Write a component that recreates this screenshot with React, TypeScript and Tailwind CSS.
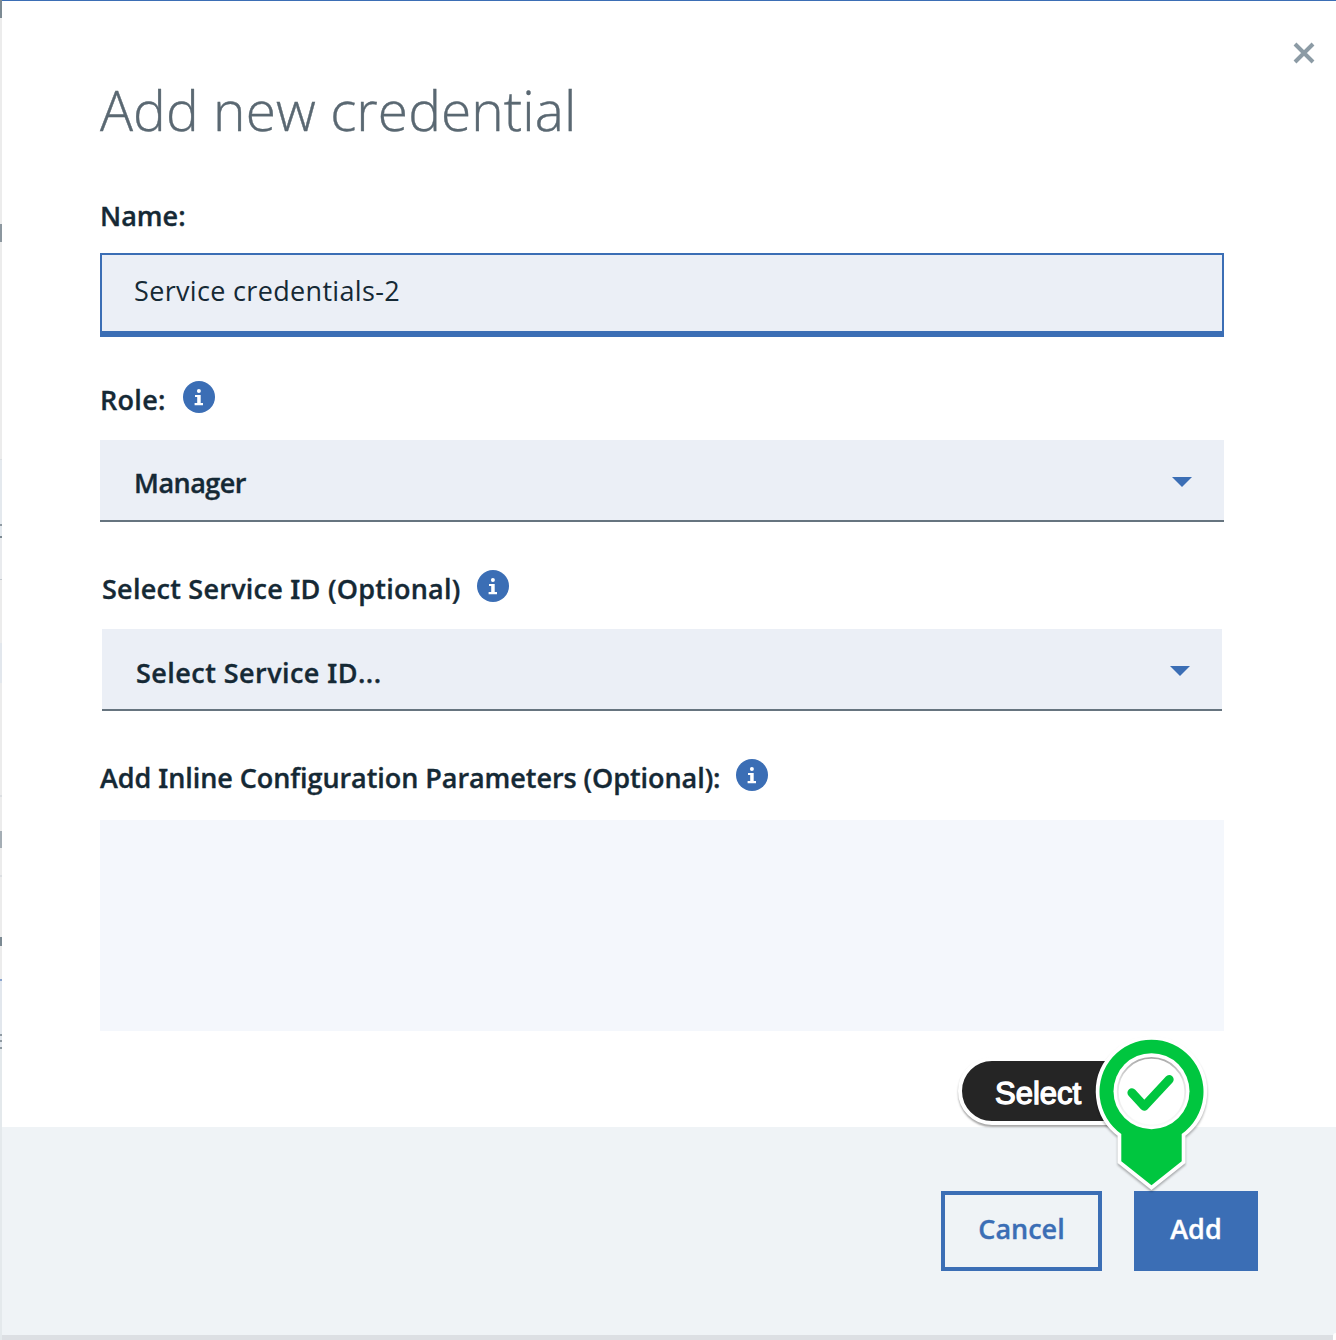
import type { ReactNode } from "react";

const labelText =
  "font-['Open_Sans',sans-serif] text-[27px] leading-9 font-semibold whitespace-nowrap text-[#152935] [-webkit-text-stroke:0.35px_#152935]";

/* Capital I with slab serifs */
function SlabI() {
  return <span className="font-['Noto_Sans',sans-serif]">I</span>;
}

function InfoIcon() {
  return (
    <svg className="-mt-[1px] size-8 shrink-0" viewBox="0 0 32 32" aria-hidden="true">
      <circle cx="16" cy="16" r="16" fill="#3b6eb5" />
      <circle cx="15.9" cy="10.1" r="2" fill="#fff" />
      <path d="M12 14H17.7V22H20V24.2H11.6V22H14.2V16H12Z" fill="#fff" />
    </svg>
  );
}

function Caret() {
  return (
    <svg className="mt-1 h-[10px] w-5" viewBox="0 0 20 10" aria-hidden="true">
      <path d="M0 0H20L10 10Z" fill="#3b6eb5" />
    </svg>
  );
}

function Select({ children, className }: { children: ReactNode; className: string }) {
  return (
    <button
      type="button"
      className={`flex h-[82px] items-center justify-between border-b-2 border-[#66747f] bg-[#ebeff6] pr-8 pl-[34px] ${className}`}
    >
      {children}
      <Caret />
    </button>
  );
}

/* Sliver of the page that lies behind the dialog */
const sliver = [
  { size: "h-[18px]", color: "bg-[#7c8a93]" },
  { size: "h-[206px]", color: "bg-[#ececec]" },
  { size: "h-[18px]", color: "bg-[#8c979f]" },
  { size: "h-[217px]", color: "bg-[#ececec]" },
  { size: "h-[1px]", color: "bg-[#dcdfe2]" },
  { size: "h-[64px]", color: "bg-[#e4e9ee]" },
  { size: "h-[2px]", color: "bg-[#8f9aa2]" },
  { size: "h-[10px]", color: "bg-[#e4e9ee]" },
  { size: "h-[2px]", color: "bg-[#7c8a93]" },
  { size: "h-[41px]", color: "bg-[#e9ebee]" },
  { size: "h-[1px]", color: "bg-[#c3c9cf]" },
  { size: "h-[63px]", color: "bg-[#ececec]" },
  { size: "h-[40px]", color: "bg-[#e2e7ed]" },
  { size: "h-[112px]", color: "bg-[#ececec]" },
  { size: "h-[2px]", color: "bg-[#dcdfe2]" },
  { size: "h-[34px]", color: "bg-[#ececec]" },
  { size: "h-[17px]", color: "bg-[#a5aeb5]" },
  { size: "h-[27px]", color: "bg-[#ececec]" },
  { size: "h-[2px]", color: "bg-[#dcdfe2]" },
  { size: "h-[60px]", color: "bg-[#ececec]" },
  { size: "h-[9px]", color: "bg-[#7c8a93]" },
  { size: "h-[33px]", color: "bg-[#ececec]" },
  { size: "h-[2px]", color: "bg-[#8aa4cf]" },
  { size: "h-[53px]", color: "bg-[#e2e7ed]" },
  { size: "h-[2px]", color: "bg-[#8f9aa2]" },
  { size: "h-[4px]", color: "bg-[#e2e7ed]" },
  { size: "h-[2px]", color: "bg-[#8f9aa2]" },
  { size: "h-[5px]", color: "bg-[#e2e7ed]" },
  { size: "h-[2px]", color: "bg-[#8f9aa2]" },
  { size: "h-[291px]", color: "bg-[#e4e9ec]" },
];

function SelectPin() {
  return (
    <div className="pointer-events-none absolute top-[1031px] left-[954px] h-[166px] w-[262px]">
      <div className="absolute top-[26px] left-1 flex h-[68px] w-[170px] items-center rounded-l-full border-4 border-white bg-[#252525] pl-[33px] shadow-[0_2px_2px_rgba(0,0,0,0.35)]">
        <span className="mt-[5px] font-['Liberation_Sans',Arial,sans-serif] text-[31px] leading-9 text-white [-webkit-text-stroke:1.3px_white]">
          Select
        </span>
      </div>
      <svg
        className="absolute inset-0 drop-shadow-[0_2px_1px_rgba(0,0,0,0.3)]"
        width="262"
        height="166"
        viewBox="954 1031 262 166"
        aria-hidden="true"
      >
        <path
          d="M1121.3 1134A52 52 0 1 1 1181.7 1134V1161.3L1151.5 1185.3L1121.3 1161.3Z"
          fill="#00c63f"
          stroke="#fff"
          strokeWidth="7.4"
          paintOrder="stroke"
        />
      </svg>
      <svg className="absolute inset-0" width="262" height="166" viewBox="954 1031 262 166" aria-hidden="true">
        <defs>
          <linearGradient id="ring" x1="0" y1="0" x2="0" y2="1">
            <stop offset="0" stopColor="#a8a8a8" />
            <stop offset="0.35" stopColor="#e2e2e2" />
            <stop offset="1" stopColor="#fafafa" />
          </linearGradient>
        </defs>
        <circle cx="1151.5" cy="1091.2" r="38" fill="#fff" />
        <circle cx="1151.5" cy="1091.7" r="33.8" fill="none" stroke="url(#ring)" strokeWidth="1.8" />
        <path
          d="M1131.9 1092.8L1144.3 1106.3L1169.2 1079.5"
          fill="none"
          stroke="#00c63f"
          strokeWidth="9"
          strokeLinecap="round"
          strokeLinejoin="round"
        />
      </svg>
    </div>
  );
}

export default function App() {
  return (
    <div className="relative flex h-[1340px] w-[1336px] overflow-hidden bg-[#dcdfe3]">
      <div className="flex w-[2px] shrink-0 flex-col">
        {sliver.map((part, i) => (
          <div key={i} className={`w-full shrink-0 ${part.size} ${part.color}`} />
        ))}
      </div>

      <section className="flex h-[1335px] grow flex-col border-t border-[#3b6eb5] bg-white">
        <div className="relative flex flex-col pr-[112px] pl-[98px]">
          <button type="button" aria-label="Close" className="absolute top-[41px] right-[21px]">
            <svg width="22" height="22" viewBox="0 0 22 22" aria-hidden="true">
              <path d="M2 2L20 20M20 2L2 20" stroke="#8c9ba5" strokeWidth="4" />
            </svg>
          </button>

          <h1 className="mt-[73px] font-['Open_Sans',sans-serif] text-[55px] leading-[72px] font-light tracking-[0.08px] whitespace-nowrap text-[#5a6872] [-webkit-text-stroke:0.4px_#5a6872]">
            Add new credential
          </h1>

          <div className={`mt-[52px] ${labelText}`}>Name:</div>
          <div className="mt-[19px] flex h-[84px] items-center border-2 border-b-[6px] border-[#3b6eb5] bg-[#ebeff6] pl-8">
            <span className="-mt-[5px] font-['Open_Sans',sans-serif] text-[27px] leading-9 tracking-[0.33px] text-[#152935]">
              Service credentials-2
            </span>
          </div>

          <div className="mt-[45px] flex h-9 gap-[17px]">
            <span className={`tracking-[0.3px] ${labelText}`}>Role:</span>
            <InfoIcon />
          </div>
          <Select className="mt-[22px]">
            <span className={`mt-[5px] tracking-[-0.5px] ${labelText}`}>Manager</span>
          </Select>

          <div className="mt-[49px] ml-[2px] flex h-9 gap-4">
            <span className={`tracking-[0.25px] ${labelText}`}>
              Select Service <SlabI />D (Optional)
            </span>
            <InfoIcon />
          </div>
          <Select className="mx-[2px] mt-[22px]">
            <span className={`mt-[7px] tracking-[0.45px] ${labelText}`}>
              Select Service <SlabI />D...
            </span>
          </Select>

          <div className="mt-[49px] flex h-9 gap-4">
            <span className={`tracking-[-0.06px] ${labelText}`}>
              Add <SlabI />nline Configuration Parameters (Optional):
            </span>
            <InfoIcon />
          </div>
          <div className="mt-6 h-[211px] bg-[#f4f7fc]" />
        </div>

        <footer className="mt-24 flex grow items-start justify-end gap-8 bg-[#eff3f6] pt-16 pr-[78px] font-['Open_Sans',sans-serif] text-[27px] leading-9 font-semibold">
          <button
            type="button"
            className="flex h-20 w-[161px] items-center justify-center border-4 border-[#3b6eb5] pb-[5px] text-[#3b6eb5] [-webkit-text-stroke:0.35px_#3b6eb5]"
          >
            Cancel
          </button>
          <button
            type="button"
            className="flex h-20 w-[124px] items-center justify-center bg-[#3b6eb5] pb-[5px] text-white [-webkit-text-stroke:0.35px_white]"
          >
            Add
          </button>
        </footer>
      </section>

      <div className="absolute right-0 bottom-0 h-[7px] w-[3px] rounded-tl-sm bg-white" />
      <SelectPin />
    </div>
  );
}
